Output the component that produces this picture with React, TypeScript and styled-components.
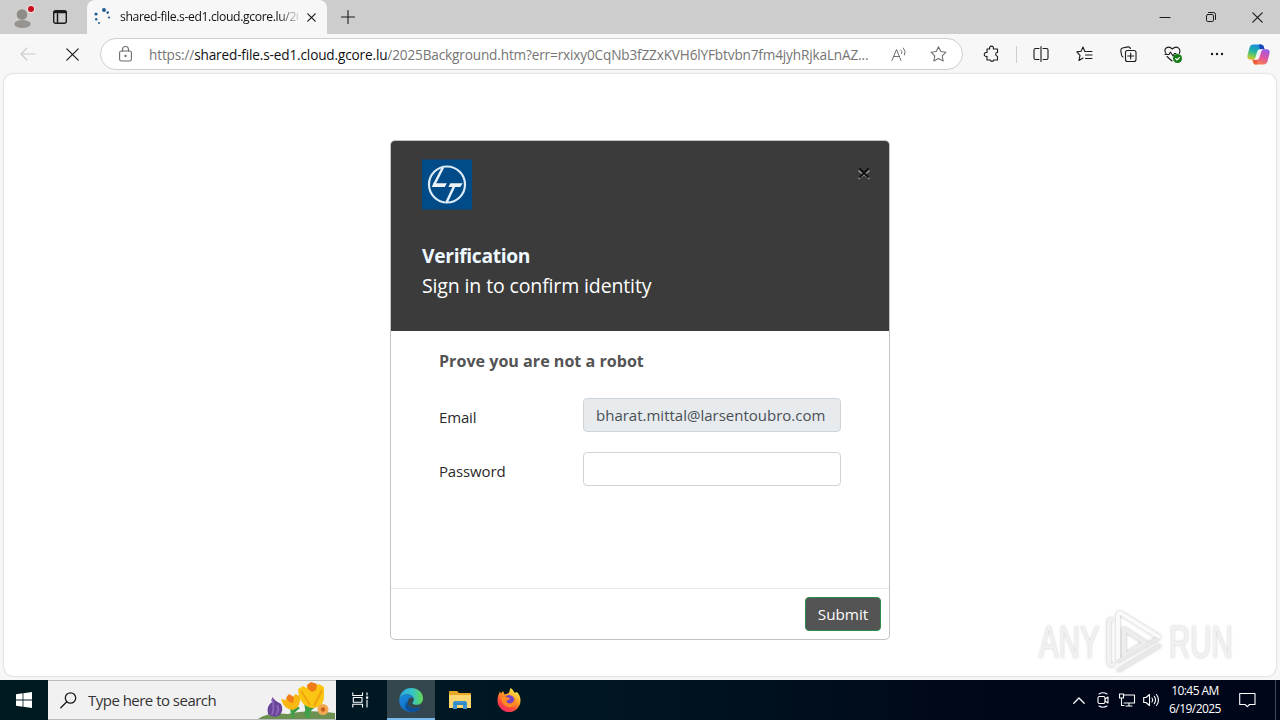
import React from "react";
import styled, { createGlobalStyle } from "styled-components";

const Global = createGlobalStyle`
  *, *::before, *::after { box-sizing: border-box; }
  body { margin: 0; overflow: hidden; background: #f7f7f7; font-family: "Open Sans", "Noto Sans", sans-serif; }
  svg { display: block; flex: none; overflow: visible; }
`;

const Screen = styled.div`
  width: 1280px;
  height: 720px;
  display: flex;
  flex-direction: column;
`;

/* Browser chrome */
const TabStrip = styled.div`
  height: 34px;
  display: flex;
  align-items: center;
  background: #cdcdcd;
`;
const Cell = styled.div<{ $w: number }>`
  width: ${(p) => p.$w}px;
  height: 100%;
  flex: none;
  display: flex;
  align-items: center;
  justify-content: center;
`;
const Tab = styled.div`
  width: 240px;
  height: 34px;
  margin-left: 11px;
  padding: 0 10px 0 6px;
  display: flex;
  align-items: center;
  background: #f7f7f7;
  border-radius: 8px 8px 0 0;
`;
const TabTitle = styled.div`
  width: 178px;
  margin: -1px 9px 0 9px;
  white-space: nowrap;
  font-size: 12.2px;
  letter-spacing: -0.38px;
  color: #111;
  mask-image: linear-gradient(to right, #000 158px, transparent 182px);
`;
const Spacer = styled.div`
  flex: 1;
`;
const Toolbar = styled.div`
  height: 40px;
  display: flex;
  align-items: center;
  padding: 0 2px 0 6px;
  background: #f7f7f7;
`;
const AddressBar = styled.div`
  width: 863px;
  height: 32px;
  margin: 0 6px 0 6px;
  padding: 0 16px 0 18px;
  display: flex;
  align-items: center;
  background: #fff;
  border: 1px solid #cfcfcf;
  border-radius: 16px;
`;
const Url = styled.div`
  width: 724px;
  flex: none;
  margin: 0 18px 0 17px;
  white-space: nowrap;
  font-size: 13.6px;
  letter-spacing: -0.15px;
  color: #757575;
`;
const Host = styled.span`
  color: #111;
`;
const StarSlot = styled.div`
  margin-left: 22px;
`;
const ToolbarDivider = styled.div`
  width: 1px;
  height: 17px;
  margin: 0 2px;
  background: #cdcdcd;
`;

/* Page */
const Viewport = styled.main`
  height: 602px;
  margin: 0 4px 4px;
  padding-top: 66px;
  position: relative;
  background: #fff;
  border-radius: 9px;
  box-shadow: 0 0 2px rgba(0, 0, 0, 0.28);
`;
const Dialog = styled.section`
  width: 500px;
  height: 500px;
  margin: 0 auto;
  display: flex;
  flex-direction: column;
  overflow: hidden;
  background: #fff;
  border: 1px solid #c2c2c2;
  border-radius: 5px;
`;
const DialogHeader = styled.header`
  height: 190px;
  padding: 18px 18px 0 31px;
  display: flex;
  justify-content: space-between;
  background: #3b3b3b;
  color: #fff;
`;
const Title = styled.h1`
  margin: 31px 0 0;
  font-size: 19.3px;
  line-height: 30px;
  font-weight: 700;
  letter-spacing: -0.35px;
  color: #eef8ff;
`;
const Subtitle = styled.div`
  font-size: 19.5px;
  line-height: 30px;
  letter-spacing: -0.13px;
`;
const CloseMark = styled.div`
  padding-top: 7px;
`;
const DialogBody = styled.div`
  height: 257px;
  padding: 18px 48px 0;
`;
const Prompt = styled.h2`
  margin: 0 0 24px;
  font-size: 16.1px;
  line-height: 25px;
  font-weight: 700;
  color: #545454;
`;
const Field = styled.div`
  display: flex;
  justify-content: space-between;
  margin-bottom: 20px;
`;
const Label = styled.div`
  padding-top: 7px;
  font-size: 15px;
  line-height: 24px;
  letter-spacing: -0.15px;
  color: #2a2a2a;
`;
const Box = styled.div<{ $filled?: boolean }>`
  width: 258px;
  height: 34px;
  padding: 0 12px;
  font-size: 15px;
  line-height: 33px;
  white-space: nowrap;
  color: #495057;
  background: ${(p) => (p.$filled ? "#e7ebee" : "#fff")};
  border: 1px solid #ced4da;
  border-radius: 4px;
`;
const DialogFooter = styled.footer`
  flex: 1;
  padding: 8px;
  display: flex;
  justify-content: flex-end;
  border-top: 1px solid #e9ecef;
`;
const Submit = styled.div`
  width: 76px;
  height: 34px;
  line-height: 33px;
  text-align: center;
  font-size: 15.3px;
  letter-spacing: -0.05px;
  color: #fff;
  background: #545454;
  border: 1px solid #2f8a4b;
  border-radius: 4px;
`;
const Watermark = styled.div`
  position: absolute;
  left: 1034px;
  top: 536px;
  display: flex;
  align-items: center;
  gap: 4px;
`;
const WatermarkWord = styled.div<{ $w: number }>`
  width: ${(p) => p.$w}px;
  display: flex;
  justify-content: center;
  font-family: "Liberation Sans", sans-serif;
  font-size: 46px;
  line-height: 60px;
  color: #f1f1f1;
  text-shadow: 0 0 3px rgba(0, 0, 0, 0.22);
`;
const Narrow = styled.span`
  display: block;
  transform: scaleX(0.64);
`;

/* Taskbar */
const Taskbar = styled.div`
  height: 40px;
  display: flex;
  background: linear-gradient(to right, #001a22, #001722 45%, #000719 78%, #000619);
`;
const SearchBox = styled.div`
  width: 288px;
  height: 40px;
  padding-left: 12px;
  display: flex;
  align-items: center;
  background: #f1f1f1;
  border: 1px solid #b9bcbd;
  border-width: 1px 0;
  font-size: 15px;
  letter-spacing: -0.52px;
  color: #333;
`;
const SearchText = styled.div`
  width: 170px;
  margin-left: 11px;
  white-space: nowrap;
`;
const TaskButton = styled.div<{ $active?: boolean }>`
  width: 48px;
  height: 40px;
  margin-left: 1px;
  display: flex;
  align-items: center;
  justify-content: center;
  background: ${(p) => (p.$active ? "#34474e" : "transparent")};
  box-shadow: ${(p) => (p.$active ? "inset 0 -2px #76b9ed" : "none")};
`;
const Clock = styled.div`
  width: 64px;
  padding-top: 2px;
  font-size: 12px;
  line-height: 18px;
  letter-spacing: -0.55px;
  text-align: center;
  white-space: nowrap;
  color: #fff;
`;
const PeekLine = styled.div`
  width: 1px;
  margin: 0 4px 0 7px;
  background: #43495a;
`;

type IconProps = { w: number; h: number; color?: string; sw?: number; children: React.ReactNode };
const Icon = ({ w, h, color = "#1b1b1b", sw = 1.1, children }: IconProps) => (
  <svg width={w} height={h} viewBox={`0 0 ${w} ${h}`} fill="none" stroke={color} strokeWidth={sw} strokeLinecap="round" strokeLinejoin="round">
    {children}
  </svg>
);

const Avatar = () => (
  <svg width="24" height="24" viewBox="0 0 24 24">
    <circle cx="12" cy="12" r="11.5" fill="#d0cecd" />
    <circle cx="12" cy="9.500" r="5.3" fill="#8f8b87" />
    <ellipse cx="12.5" cy="19" rx="8.3" ry="4" fill="#979390" />
    <circle cx="21" cy="4" r="4.3" fill="#f1d9dc" />
    <circle cx="21" cy="4" r="3" fill="#c50f1f" />
  </svg>
);

const Spinner = () => (
  <svg width="18" height="18" viewBox="0 0 18 18" fill="#235c92">
    <circle cx="3" cy="6" r="1.6" />
    <circle cx="3.2" cy="11.2" r="1.2" />
    <circle cx="6" cy="15" r="1" />
    <circle cx="11" cy="2" r="2" />
    <circle cx="14.7" cy="4.6" r="1.3" />
    <circle cx="16" cy="9.5" r="1.1" />
  </svg>
);

const Cross = ({ s }: { s: number }) => (
  <Icon w={s} h={s} sw={1.2}>
    <path d={`M.8 .8 ${s - 0.8} ${s - 0.8}M${s - 0.8} .8 .8 ${s - 0.8}`} />
  </Icon>
);

const Copilot = () => (
  <svg width="23" height="21" viewBox="0 0 23 21">
    <defs>
      <linearGradient id="cpA" x1="0.5" y1="0" x2="0.2" y2="1">
        <stop offset="0" stopColor="#1a8be0" />
        <stop offset="0.45" stopColor="#25b5a0" />
        <stop offset="0.8" stopColor="#8ecf4c" />
        <stop offset="1" stopColor="#f4b92c" />
      </linearGradient>
      <linearGradient id="cpB" x1="0.7" y1="0" x2="0.3" y2="1">
        <stop offset="0" stopColor="#9b5be6" />
        <stop offset="0.5" stopColor="#e0559f" />
        <stop offset="1" stopColor="#f98345" />
      </linearGradient>
    </defs>
    <path d="M6.5.5h7.2c1.9 0 2.7 1 3.2 2.6l.6 2.1h-2c-1.8 0-2.6.8-3.1 2.4l-1.8 5.6C10 15 9 15.7 7.3 15.7H3.5c-2.5 0-3.7-1.7-3-4.4l1.9-7.4C3.1 1.6 4.3.5 6.5.5Z" fill="url(#cpA)" />
    <path d="M12 .5h1.700c1.9 0 2.7 1 3.2 2.6l.6 2.1h-2c-1.3 0-2.1.4-2.600 1.300Z" fill="#1746b8" />
    <path d="M16.500 20.500H9.300c-1.9 0-2.7-1-3.2-2.6l-.6-2.1h2c1.800 0 2.600-.8 3.100-2.400l1.800-5.600c.6-1.800 1.600-2.500 3.300-2.500h3.800c2.500 0 3.700 1.700 3 4.400l-1.900 7.400c-.7 2.300-1.900 3.400-4.100 3.400Z" fill="url(#cpB)" />
    <path d="M5.500 15.800h2c1.800 0 2.600-.8 3.100-2.400l-.3 5c0 1.200-.3 2-1 2.100-1.900 0-2.700-1-3.200-2.600Z" fill="#ef5d3a" />
    <path d="M10.300 7.300 8.600 13c-.3 1.200-1 2-2 2.700h3c1.500 0 2.300-.8 2.800-2.300l1.900-5.900c.3-1 1-1.800 2-2.300h-3c-1.500 0-2.500.6-3 2.100Z" fill="#fff" opacity=".9" />
  </svg>
);

const BrandMark = () => (
  <svg width="51" height="51" viewBox="0 0 51 51">
    <rect width="50" height="50" y=".5" fill="#004b88" />
    <circle cx="25" cy="25.500" r="18" fill="none" stroke="#dcebf7" strokeWidth="2.200" />
    <path d="M20.800 8.800 11.800 26.200" stroke="#e6f1fa" strokeWidth="2.500" />
    <path d="M11.500 24.300h13.300l-2 3.600H9.800ZM28.300 24.300h12.500l-2.600 3.600H26.400Z" fill="#eef3f8" />
    <path d="M32.500 26.500 24.700 43" stroke="#e6f1fa" strokeWidth="2.500" />
  </svg>
);

const PlaySvg = styled.svg`
  filter: drop-shadow(0 0 1.5px rgba(0, 0, 0, 0.26));
`;
const PlayMark = () => (
  <PlaySvg width="58" height="64" viewBox="0 0 58 64" fill="none" strokeLinejoin="round" strokeLinecap="round">
    <path d="M13 50V5.500Q13 1.500 17 4L54 27" stroke="#fafafa" strokeWidth="4" />
    <path d="M6 9.500Q4 10 4 13V52Q4 56 8 55" stroke="#f2f2f2" strokeWidth="4" />
    <path d="M19 19V46L40 32.500Z" stroke="#ededed" strokeWidth="4" />
    <path d="M13 51 52 29M14 60 54 36" stroke="#e9e9e9" strokeWidth="3.500" />
  </PlaySvg>
);

const Flowers = () => (
  <svg width="78" height="38" viewBox="0 0 78 38">
    <path d="M0 38Q10 31 30 33Q50 28 77 32V38Z" fill="#6d9151" />
    <path d="M33 22 34 34 42 27ZM49 19 46 35 60 24Z" fill="#3c9a45" />
    <path d="M47 18 50 37M54 20 50 37M33 24 35 37" stroke="#43a04a" strokeWidth="3" />
    <path d="M14 16Q18 21 23 23Q26 29 22 34Q16 38 10 33Q8 25 14 21Z" fill="#684499" />
    <path d="M14 18Q17 25 14 34M19 24Q22 28 18 34" stroke="#8b65b9" strokeWidth="2" fill="none" />
    <path d="M23 18 28 19 30 14 35 17 37 13 42 15Q43 27 35 29Q26 29 23 18Z" fill="#f8b712" />
    <path d="M28 17 31 13 36 16 35 22 31 21Z" fill="#f07f19" />
    <path d="M40 8 45 5 48 7 52 2 58 5 61 3 66 6 66 15Q66 27 54 27Q41 25 40 8Z" fill="#fbc513" />
    <path d="M49 4 53 1 59 3 58 9 54 11 50 8Z" fill="#ef7c16" />
    <path d="M43 10 52 24 M64 9 56 25" stroke="#efa40d" strokeWidth="2" />
    <circle cx="65" cy="28.500" r="5.500" fill="#f3a750" />
    <circle cx="65" cy="28.500" r="2.200" fill="#c95f1e" />
  </svg>
);

const Edge = () => (
  <svg width="24" height="24" viewBox="0 0 24 24">
    <defs>
      <linearGradient id="eg1" x1="0" y1="0.4" x2="1" y2="0.4">
        <stop offset="0" stopColor="#2aa5e1" />
        <stop offset="0.55" stopColor="#35c5c8" />
        <stop offset="1" stopColor="#62d850" />
      </linearGradient>
      <linearGradient id="eg2" x1="0" y1="0" x2="0.7" y2="1">
        <stop offset="0" stopColor="#1a8dde" />
        <stop offset="1" stopColor="#1164b9" />
      </linearGradient>
    </defs>
    <path d="M.4 11C1 4.500 6 0 12 0c7 0 12 4.600 12 10.500 0 4-3 6.300-6.300 6.300-2.700 0-4.200-.9-4.200-1.900 0-.7 1.300-1.100 1.300-3.300C14.800 8.400 11.500 6.500 8 6.500 4 6.500 1.500 8.500.4 11Z" fill="url(#eg1)" />
    <path d="M.2 13.500C0 9 4 6.500 8 6.500c2.800 0 5.400 1.200 6.400 3.200-1-.6-5-.6-5.800 3.800-.8 4.700 4.400 8.500 11.500 5.800.8-.3 1.400.2.900.9A12 12 0 0 1 .2 13.500Z" fill="url(#eg2)" />
    <path d="M8.600 13.500c-.8 4.700 4.400 8.500 11.500 5.800.8-.3 1.400.2.900.9-2 2.600-5.500 4-9 3.800C6.500 22.500 4 17 8.600 13.500Z" fill="#0d4f97" />
  </svg>
);

const Explorer = () => (
  <svg width="22" height="19" viewBox="0 0 22 19">
    <path d="M0 1Q0 0 1 0H8L10 2H21Q22 2 22 3V7H0Z" fill="#e9a928" />
    <path d="M0 4H22V17H0Z" fill="#fcd771" />
    <path d="M4 18V12Q4 10 6 10H16Q18 10 18 12V18H14V14H8V18Z" fill="#3c94d0" />
    <path d="M5 13H17" stroke="#287bb8" />
  </svg>
);

const Firefox = () => (
  <svg width="24" height="24" viewBox="0 0 24 24">
    <defs>
      <linearGradient id="ff" x1="0.8" y1="0.05" x2="0.25" y2="0.95">
        <stop offset="0" stopColor="#fff04a" />
        <stop offset="0.4" stopColor="#ffa126" />
        <stop offset="0.7" stopColor="#ff5238" />
        <stop offset="1" stopColor="#ec2860" />
      </linearGradient>
    </defs>
    <path d="M13.500 0C15 .8 16.500 2.500 17.300 4.500 18.500 4.800 19.500 4.300 20 4c2.500 2.500 3.500 5.500 3.500 8.500A11.500 11.500 0 0 1 .5 12.500C.4 9 1.500 6 3 3.500L4 5.500 6 3 7.500 6.500C9.500 6 11 5.500 12 4.500 12.700 3.300 12.800 1.500 13.500 0Z" fill="url(#ff)" />
    <circle cx="12" cy="12.500" r="5.500" fill="#7844c5" />
    <path d="M3.500 9.500Q7 6.500 10.500 9.500L13 10Q12.500 12.300 9.500 12.500 9.500 15.500 13 15.500 17 15 17.500 10 20.500 15 16 18.500 9 20.500 5.500 15Z" fill="#ff8a22" />
  </svg>
);

const App = () => (
  <Screen>
    <Global />
    <TabStrip>
      <Cell $w={44}><Avatar /></Cell>
      <Cell $w={32}>
        <Icon w={14} h={14} sw={1.4}>
          <rect x=".7" y=".7" width="12.6" height="12.6" rx="2" />
          <path d="M1 2.500H13M4.500 4V13" strokeWidth="1.5" />
          <path d="M1.500 1.800H12.500" strokeWidth="2" />
        </Icon>
      </Cell>
      <Tab>
        <Spinner />
        <TabTitle>shared-file.s-ed1.cloud.gcore.lu/20</TabTitle>
        <Cross s={9} />
      </Tab>
      <Cell $w={42}>
        <Icon w={14} h={14}><path d="M7 .5V13.500M.5 7H13.500" /></Icon>
      </Cell>
      <Spacer />
      <Cell $w={46}><Icon w={10} h={10}><path d="M0 5.500H10" /></Icon></Cell>
      <Cell $w={46}>
        <Icon w={10} h={10} sw={1}>
          <rect x=".5" y="2.5" width="7" height="7" rx="1.3" />
          <path d="M2.500.5H7.500Q9.500.5 9.500 2.500V7.500" />
        </Icon>
      </Cell>
      <Cell $w={46}><Cross s={11} /></Cell>
    </TabStrip>

    <Toolbar>
      <Cell $w={44}>
        <Icon w={16} h={14} color="#c9c9c9"><path d="M15 7H1M7 1 1 7 7 13" /></Icon>
      </Cell>
      <Cell $w={44}><Cross s={13} /></Cell>
      <AddressBar>
        <Icon w={13} h={16} color="#6b6b6b">
          <rect x=".6" y="5" width="11.8" height="10" rx="1.8" />
          <path d="M3.500 5V3.500a3 3 0 0 1 6 0V5" />
          <circle cx="6.5" cy="10" r=".6" fill="#6b6b6b" />
        </Icon>
        <Url>
          https://<Host>shared-file.s-ed1.cloud.gcore.lu</Host>/2025Background.htm?err=rxixy0CqNb3fZZxKVH6lYFbtvbn7fm4jyhRjkaLnAZ...
        </Url>
        <Icon w={17} h={14} color="#707070" sw={1}>
          <path d="M1 13.500 5.500 2.500 10 13.500M2.700 9.500H8.400M10 3Q11.500 4.500 10.700 6.500M12.300 1Q15.500 4 13.500 8" />
        </Icon>
        <StarSlot>
          <Icon w={17} h={16} color="#707070">
            <path d="M8.500.8 10.800 5.500 16 6.200 12.200 9.800 13.200 15 8.500 12.500 3.800 15 4.800 9.800 1 6.200 6.200 5.500Z" />
          </Icon>
        </StarSlot>
      </AddressBar>
      <Cell $w={45}>
        <Icon w={16} h={16}>
          <path d="M3 3H5.700A2 2 0 1 1 9.300 3H13.500V6.500A1.200 1.200 0 0 0 13.500 10.200V14H9.800A1.800 1.800 0 0 1 6.300 14H3V10.300A2 2 0 1 1 3 6.600Z" />
        </Icon>
      </Cell>
      <ToolbarDivider />
      <Cell $w={43}>
        <Icon w={16} h={16}>
          <path d="M6 2.500H2.500Q1 2.500 1 4V12Q1 13.500 2.500 13.500H6M10 2.500H13.500Q15 2.500 15 4V12Q15 13.500 13.500 13.500H10M8 .5V15.500" />
        </Icon>
      </Cell>
      <Cell $w={44}>
        <Icon w={17} h={16}>
          <path d="M10 5.500H8.900L7 1 5.100 5.300.8 5.900 4 9.300 3 14.500 7 12M11 5.500H16M9.500 9H16M9.500 12.500H16" />
        </Icon>
      </Cell>
      <Cell $w={44}>
        <Icon w={17} h={16}>
          <rect x="5.5" y="4.5" width="10.5" height="11" rx="2" />
          <path d="M10.700 7V13M7.700 10H13.700M3 11Q1.800 10.500 1.500 9L.8 4.500Q.8 2.500 2.500 2L8 .9Q10 .8 10.500 2.500" />
        </Icon>
      </Cell>
      <Cell $w={45}>
        <Icon w={18} h={17}>
          <path d="M2 7.500Q-.5 4 2.500 1.800 5.500 0 8.300 3 11.500 0 14.300 1.900 17 4 15.300 7.500M1 8.500H5L6.500 6 9 10 10.500 7.500H12M3 10.500 8 15" />
          <circle cx="13.5" cy="12.5" r="4.5" fill="#107c10" stroke="none" />
          <path d="M11.500 12.500 13 14 15.500 11.500" stroke="#fff" />
        </Icon>
      </Cell>
      <Cell $w={43}>
        <Icon w={14} h={4}><g fill="#1b1b1b" stroke="none"><circle cx="2" cy="2" r="1.2" /><circle cx="7" cy="2" r="1.2" /><circle cx="12" cy="2" r="1.2" /></g></Icon>
      </Cell>
      <Cell $w={40}><Copilot /></Cell>
    </Toolbar>

    <Viewport>
      <Dialog>
        <DialogHeader>
          <div>
            <BrandMark />
            <Title>Verification</Title>
            <Subtitle>Sign in to confirm identity</Subtitle>
          </div>
          <CloseMark>
            <Icon w={14} h={14} sw={1.8}>
              <path d="M2 5 7 9 12 5M2 12.500 7 8.500 12 12.500" stroke="#a0a0a0" strokeWidth="1.5" />
              <path d="M3 3 11 11M11 3 3 11" stroke="#101010" />
            </Icon>
          </CloseMark>
        </DialogHeader>
        <DialogBody>
          <Prompt>Prove you are not a robot</Prompt>
          <Field>
            <Label>Email</Label>
            <Box $filled>bharat.mittal@larsentoubro.com</Box>
          </Field>
          <Field>
            <Label>Password</Label>
            <Box />
          </Field>
        </DialogBody>
        <DialogFooter><Submit>Submit</Submit></DialogFooter>
      </Dialog>
      <Watermark>
        <WatermarkWord $w={63}><Narrow>ANY</Narrow></WatermarkWord>
        <PlayMark />
        <WatermarkWord $w={67}><Narrow>RUN</Narrow></WatermarkWord>
      </Watermark>
    </Viewport>

    <Taskbar>
      <Cell $w={48}>
        <svg width="16" height="16" viewBox="0 0 16 16" fill="#fff">
          <path d="M0 2.200 6.600 1.300V7.600H0ZM7.400 1.200 16 0V7.600H7.400ZM0 8.400H6.600V14.700L0 13.800ZM7.400 8.400H16V16L7.400 14.800Z" />
        </svg>
      </Cell>
      <SearchBox>
        <Icon w={17} h={17} sw={1.3}>
          <circle cx="10.5" cy="6" r="5.2" />
          <path d="M6.800 9.800.8 15.800" />
        </Icon>
        <SearchText>Type here to search</SearchText>
        <Flowers />
      </SearchBox>
      <Cell $w={48}>
        <Icon w={17} h={16} color="#fff">
          <path d="M.8.8V3.500H10.500V.8M.8 15V12.300H10.500V15M1.300 5.500H10V10.300H1.300ZM15 .8V3M15 8V15" />
          <rect x="14" y="4.5" width="2.2" height="2.2" fill="#fff" stroke="none" />
        </Icon>
      </Cell>
      <Cell $w={2} />
      <TaskButton $active><Edge /></TaskButton>
      <TaskButton><Explorer /></TaskButton>
      <TaskButton><Firefox /></TaskButton>
      <Spacer />
      <Cell $w={24}><Icon w={12} h={7} color="#fff" sw={1.3}><path d="M.8 6.200 6 1 11.200 6.200" /></Icon></Cell>
      <Cell $w={24}>
        <Icon w={12} h={16} color="#fff">
          <rect x="1" y="4.5" width="7" height="7" rx="1.5" />
          <path d="M8 7 11 5V11L8 9M2 2Q6-.5 10 2M2 14Q6 16.500 10 14" />
        </Icon>
      </Cell>
      <Cell $w={24}>
        <Icon w={16} h={14} color="#fff">
          <path d="M5 2H15.500V10H5M10 10V13M7 13H13M.5 1H4.500V5H.5ZM2.500 5V12.500H5" />
        </Icon>
      </Cell>
      <Cell $w={24}>
        <Icon w={16} h={14} color="#fff">
          <path d="M.7 4.500H3L6.500 1.500V12.500L3 9.500H.7ZM9 5Q10.500 7 9 9M11.300 3.300Q13.800 7 11.300 10.700M13.500 1.500Q17.500 7 13.500 12.500" />
        </Icon>
      </Cell>
      <Clock>10:45 AM<br />6/19/2025</Clock>
      <Cell $w={41}>
        <Icon w={17} h={16} color="#fff"><path d="M.7 1.500H16V12.500H10.500L8.300 14.700 6 12.500H.7Z" /></Icon>
      </Cell>
      <PeekLine />
    </Taskbar>
  </Screen>
);

export default App;
